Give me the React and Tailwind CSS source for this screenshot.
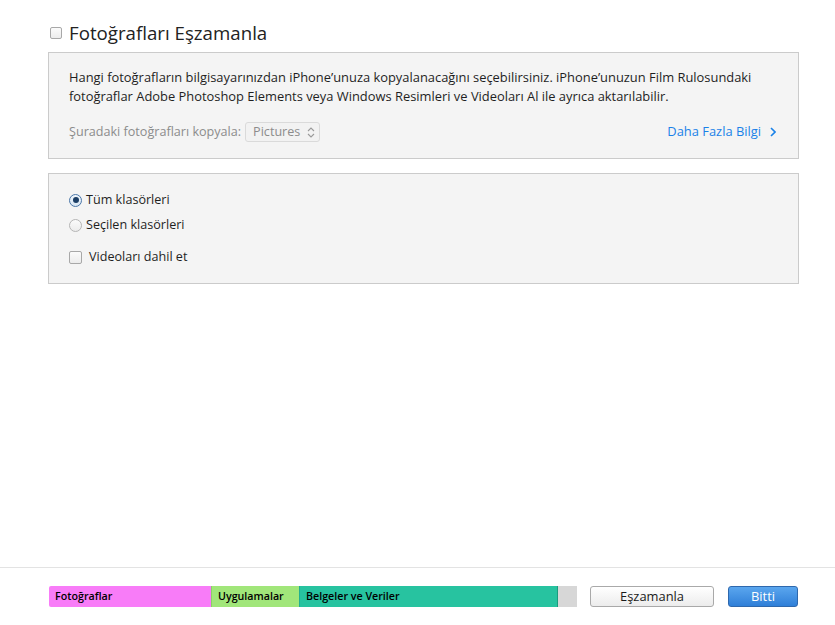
export default function App() {
  const font = { fontFamily: '"Segoe UI", "Open Sans", "Noto Sans", sans-serif' };
  return (
    <div className="relative w-[835px] h-[625px] bg-white text-[#1a1a1a] overflow-hidden" style={font}>
      <div className="flex flex-col pl-[48px] pr-[36px] pt-[20px]">
        {/* title */}
        <label className="flex items-center gap-[7px] pl-[2px] h-[26px]">
          <span className="w-[12px] h-[12px] border border-[#a8a8a8] rounded-[2px] bg-gradient-to-b from-[#fbfbfb] to-[#ececec]" />
          <span className="text-[18.7px] leading-none text-[#222]">Fotoğrafları Eşzamanla</span>
        </label>

        {/* info panel */}
        <div className="mt-[6px] h-[107px] border border-[#cbcbcb] bg-[#f4f4f4] px-[20px] pt-[15px]">
          <p className="text-[12.9px] leading-[19px] text-[#1f1f1f]">
            Hangi fotoğrafların bilgisayarınızdan iPhone’unuza kopyalanacağını seçebilirsiniz. iPhone’unuzun Film Rulosundaki
            <br />
            fotoğraflar Adobe Photoshop Elements veya Windows Resimleri ve Videoları Al ile ayrıca aktarılabilir.
          </p>
          <div className="mt-[16px] flex items-center justify-between">
            <div className="flex items-center gap-[4px] text-[12.6px] text-[#8c8c8c]">
              <span>Şuradaki fotoğrafları kopyala:</span>
              <span className="flex items-center h-[20px] w-[75px] border border-[#dadada] rounded-[3px] bg-[#f2f2f2] pl-[7px] pr-[4px] justify-between">
                <span>Pictures</span>
                <svg width="8" height="11" viewBox="0 0 8 11" fill="none" stroke="#9a9a9a" strokeWidth="1.1">
                  <path d="M1 4 L4 1 L7 4" />
                  <path d="M1 7 L4 10 L7 7" />
                </svg>
              </span>
            </div>
            <div className="flex items-center gap-[9px] pr-[2px] text-[12.9px] text-[#1a82e8]">
              <span>Daha Fazla Bilgi</span>
              <svg width="6" height="10" viewBox="0 0 6 10" fill="none" stroke="#1a82e8" strokeWidth="1.6">
                <path d="M1 1 L5 5 L1 9" />
              </svg>
            </div>
          </div>
        </div>

        {/* options panel */}
        <div className="mt-[14px] h-[111px] border border-[#cbcbcb] bg-[#f4f4f4] pl-[20px] pt-[17px] text-[12.6px] text-[#1f1f1f]">
          <div className="flex items-center gap-[4px] h-[18px]">
            <span className="flex items-center justify-center w-[13px] h-[13px] rounded-full border border-[#4a76a8] bg-gradient-to-b from-[#f0f6fc] to-[#d8e6f3]">
              <span className="w-[6px] h-[6px] rounded-full bg-[#1c3e66]" />
            </span>
            <span>Tüm klasörleri</span>
          </div>
          <div className="mt-[7px] flex items-center gap-[4px] h-[18px]">
            <span className="w-[13px] h-[13px] rounded-full border border-[#b5b5b5] bg-gradient-to-b from-[#fbfbfb] to-[#ececec]" />
            <span>Seçilen klasörleri</span>
          </div>
          <div className="mt-[14px] flex items-center gap-[7px] h-[18px]">
            <span className="w-[13px] h-[13px] rounded-[2px] border border-[#a8a8a8] bg-gradient-to-b from-[#fbfbfb] to-[#ececec]" />
            <span>Videoları dahil et</span>
          </div>
        </div>
      </div>

      {/* footer */}
      <div className="absolute left-0 right-0 top-[567px] border-t border-[#e3e3e3]">
        <div className="flex items-center pl-[49px] pt-[18px]">
          <div className="flex h-[21px] w-[528px] text-[10.7px] font-semibold text-black">
            <div className="w-[162px] bg-[#f87cf8] flex items-center pl-[6px] rounded-l-[2px]">Fotoğraflar</div>
            <div className="w-[88px] bg-[#a1e67a] flex items-center pl-[6px] border-l border-[#8ccf68]">Uygulamalar</div>
            <div className="w-[259px] bg-[#27c3a0] flex items-center pl-[6px] border-l border-[#22b090] border-r border-r-[#1a9c7e]">Belgeler ve Veriler</div>
            <div className="flex-1 bg-[#d7d7d7]" />
          </div>
          <button className="ml-[13px] h-[21px] w-[124px] rounded-[3px] border border-[#a9a9a9] bg-gradient-to-b from-[#ffffff] to-[#ececec] text-[12.9px] text-[#1a1a1a]">
            Eşzamanla
          </button>
          <button className="ml-[14px] h-[21px] w-[70px] rounded-[3px] border border-[#2e68ad] bg-gradient-to-b from-[#5aa6ee] to-[#2f7fd8] text-[12.9px] text-white">
            Bitti
          </button>
        </div>
      </div>
    </div>
  );
}
